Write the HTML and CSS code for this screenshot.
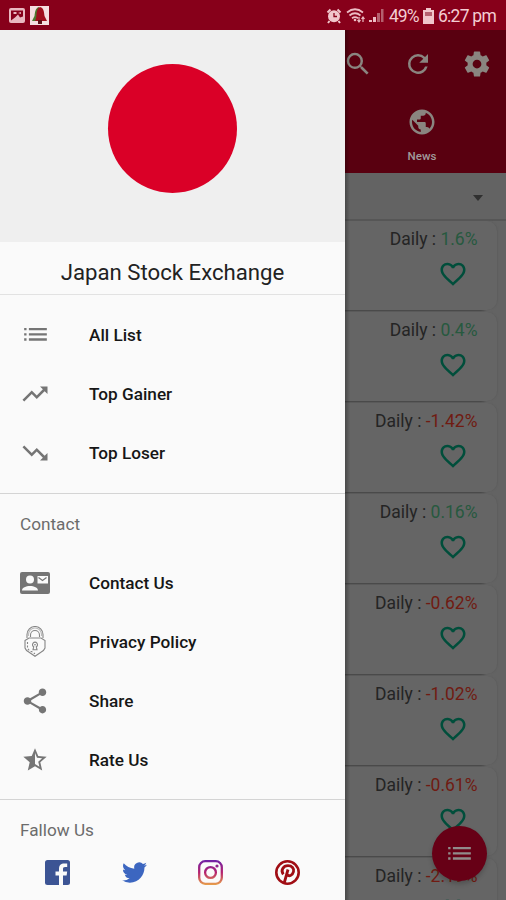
FILE: index.html
```html
<!DOCTYPE html>
<html lang="en">
<head>
<meta charset="utf-8">
<title>Japan Stock Exchange</title>
<link rel="stylesheet" href="styles.css">
</head>
<body>
<svg class="defs" aria-hidden="true">
  <defs>
    <symbol id="list" viewBox="0 0 24 18"><path d="M0 1h2.500v2.500H0zM5 1h19v2.500H5zM0 6.500h2.500V9H0zM5 6.500h19V9H5zM0 12h2.500v2.500H0zM5 12h19v2.500H5z"/></symbol>
    <symbol id="heart" viewBox="0 0 24 24"><path d="M16.5 3c-1.74 0-3.41.81-4.5 2.09C10.91 3.81 9.24 3 7.5 3 4.42 3 2 5.42 2 8.5c0 3.78 3.4 6.86 8.55 11.54L12 21.35l1.45-1.32C18.6 15.36 22 12.28 22 8.5 22 5.42 19.58 3 16.5 3zm-4.4 15.55l-.1.1-.1-.1C7.14 14.24 4 11.39 4 8.5 4 6.5 5.5 5 7.5 5c1.54 0 3.04.99 3.57 2.36h1.87C13.46 5.99 14.96 5 16.5 5c2 0 3.5 1.5 3.5 3.5 0 2.89-3.14 5.74-7.9 10.05z"/></symbol>
  </defs>
</svg>
<div class="phone">
  <header class="status">
    <svg class="st-pic" viewBox="0 0 16 15"><rect width="16" height="15" rx="2" fill="#e9b8c0"/><path d="M2 2.500h12v6l-3 1-2-3-3 3-4 3z" fill="#87001a"/><path d="M4.500 4h3v2h-3zM9 5l3-1v2z" fill="#e9b8c0"/></svg>
    <svg class="st-bell" viewBox="0 0 19 19"><rect width="19" height="19" fill="#f5dfe0"/><path d="M9 1C5 2 5 7 4.500 10L2 15h7z" fill="#4d7a2e"/><path d="M10 1c4 1 4 5 4.500 9l2.500 5H5c2-3 1-7 2-10 .5-2 1-3 3-4z" fill="#a00f1d"/><path d="M8 14h4v4H8z" fill="#5b1116"/></svg>
    <span class="grow"></span>
    <svg class="st-alarm" viewBox="0 0 16 16"><circle cx="8" cy="8.300" r="6" fill="#f0c5cb"/><path d="M1.500 4.500l3-3M14.500 4.500l-3-3M3.500 13L2 15M12.500 13l1.500 2" stroke="#f0c5cb" stroke-width="2"/><path d="M8 5v3.500h3" fill="none" stroke="#87001a" stroke-width="1.300"/></svg>
    <svg class="st-wifi" viewBox="0 0 20 17"><g fill="none" stroke="#edbcc4" stroke-width="1.700"><path d="M1 5.500Q9 -1 17 5.500M3.500 8.500Q9 4 14.500 8.500M6 11.200Q9 9 12 11.200"/></g><circle cx="9" cy="13" r="1.300" fill="#edbcc4"/><path d="M13 10v5m-1.500-2l1.500 2 1.500-2M17 15v-5m-1.500 2l1.500-2 1.500 2" stroke="#edbcc4" fill="none" stroke-width="1.200"/></svg>
    <svg class="st-signal" viewBox="0 0 15 15"><path d="M0 12h3v2H0zM4 9h3v5H4z" fill="#edbcc4"/><path d="M8 5h3v9H8zM12 1h2.500v13H12z" fill="#b5606f"/></svg>
    <span class="st-pct">49%</span>
    <svg class="st-batt" viewBox="0 0 11 16"><path d="M3 0h5v2h3v14H0V2h3z" fill="#f0c5cb"/><path d="M2 4h7v4H2z" fill="#b5606f"/></svg>
    <span class="st-time">6:27 pm</span>
  </header>
  <div class="body">
    <nav class="drawer">
      <div class="flag"><span class="disc"></span></div>
      <h1 class="title">Japan Stock Exchange</h1>
      <ul class="group group-lists">
        <li class="item"><span class="ico"><svg class="i-list"><use href="#list"/></svg></span>All List</li>
        <li class="item"><span class="ico"><svg class="i30" viewBox="0 0 24 24"><path d="M16 6l2.290 2.290-4.880 4.880-4-4L2 16.590 3.410 18l6-6 4 4 6.300-6.290L22 12V6z"/></svg></span>Top Gainer</li>
        <li class="item"><span class="ico"><svg class="i30" viewBox="0 0 24 24"><path d="M16 18l2.290-2.290-4.880-4.880-4 4L2 7.410 3.410 6l6 6 4-4 6.300 6.290L22 12v6z"/></svg></span>Top Loser</li>
      </ul>
      <h2 class="subhead">Contact</h2>
      <ul class="group group-contact">
        <li class="item"><span class="ico"><svg class="i-card" viewBox="0 0 30 22"><rect width="30" height="22" rx="2"/><g fill="#fafafa"><circle cx="10" cy="7.500" r="4"/><path d="M2 18.500c0-6 16-6 16 0zM17.500 4H28v7.500H17.500z"/></g><path d="M18.500 5.500l4 3 4-3" fill="none" stroke="#757575" stroke-width="1.200"/></svg></span>Contact Us</li>
        <li class="item"><span class="ico"><svg class="i-lock" viewBox="0 0 22 31"><g fill="none" stroke="#858585" stroke-width="1.100"><path d="M3 12V8.500a8 8 0 0 1 16 0V12M6.500 11V9a4.500 4.500 0 0 1 9 0v2"/><path d="M4.500 10V8.500a6.500 6.500 0 0 1 13 0V10" stroke="#bbb"/><path d="M1 14.500l4-2.500h12l4 2.500v7.500q-1 3-4.500 4.500L11 30.300l-5.500-3.800Q2 25 1 22z"/><path d="M3.500 16v6q1 2.500 4 3.500l3.500 2.300" stroke-dasharray="2 1.500"/><path d="M9.700 20.800a2.500 2.500 0 1 1 2.600 0l.7 3H9z"/></g><circle cx="11" cy="18.700" r=".8"/></svg></span>Privacy Policy</li>
        <li class="item"><span class="ico"><svg class="i-share" viewBox="0 0 24 24"><path d="M18 16.080c-.76 0-1.440.3-1.960.77L8.910 12.700c.05-.23.09-.46.09-.7s-.04-.47-.09-.7l7.050-4.110c.54.5 1.250.81 2.040.81 1.660 0 3-1.340 3-3s-1.340-3-3-3-3 1.340-3 3c0 .24.04.47.09.7L8.040 9.810C7.500 9.310 6.790 9 6 9c-1.660 0-3 1.340-3 3s1.340 3 3 3c.79 0 1.500-.31 2.040-.81l7.120 4.160c-.05.21-.08.43-.08.65 0 1.610 1.310 2.920 2.920 2.920s2.920-1.310 2.920-2.920-1.310-2.920-2.920-2.920z"/></svg></span>Share</li>
        <li class="item"><span class="ico"><svg class="i-star" viewBox="0 0 24 24"><path d="M22 9.240l-7.190-.62L12 2 9.190 8.630 2 9.240l5.460 4.730L5.820 21 12 17.270 18.180 21l-1.630-7.030L22 9.240zM12 15.400V6.100l1.710 4.040 4.380.38-3.320 2.880 1 4.280L12 15.400z"/></svg></span>Rate Us</li>
      </ul>
      <h2 class="subhead">Fallow Us</h2>
      <div class="social">
        <svg viewBox="0 0 25 25"><rect width="25" height="25" rx="2.500" fill="#3c5494"/><path d="M14 25v-9.500h-3.500v-4H14V9c0-3.800 2-5.500 5.200-5.500h3v3.600h-2.100c-1.700 0-2.100.8-2.100 2.100v2.300h4.200l-.6 4H18V25z" fill="#fafafa"/></svg>
        <svg viewBox="0 0 24 24"><path fill="#3c66c0" d="M23.950 4.570a10 10 0 0 1-2.820.77 4.960 4.960 0 0 0 2.160-2.720c-.95.550-2 .960-3.130 1.180a4.920 4.920 0 0 0-8.380 4.480C7.690 8.090 4.070 6.130 1.640 3.160a4.820 4.820 0 0 0-.67 2.470c0 1.710.87 3.210 2.190 4.100a4.900 4.900 0 0 1-2.230-.62v.06a4.920 4.920 0 0 0 3.950 4.830 5 5 0 0 1-2.210.08 4.940 4.940 0 0 0 4.600 3.420A9.870 9.870 0 0 1 0 19.540a13.990 13.990 0 0 0 7.550 2.210c9.050 0 14-7.500 14-13.980 0-.21 0-.42-.02-.63a9.940 9.940 0 0 0 2.420-2.570z"/></svg>
        <svg viewBox="0 0 25 25"><defs><linearGradient id="ig" x1="0" y1="0" x2="0" y2="25" gradientUnits="userSpaceOnUse"><stop offset="0" stop-color="#6d22a8"/><stop offset=".5" stop-color="#b5226f"/><stop offset="1" stop-color="#e8a04a"/></linearGradient></defs><g fill="none" stroke="url(#ig)" stroke-width="2.300"><rect x="1.200" y="1.200" width="22.600" height="22.600" rx="6"/><circle cx="12.500" cy="12.500" r="5.400"/></g><circle cx="19" cy="6" r="1.600" fill="#8f238c"/></svg>
        <svg viewBox="0 0 25 25"><circle cx="12.500" cy="12.500" r="11.200" fill="none" stroke="#a00d14" stroke-width="2.600"/><path d="M8.300 14.300c-3-4 0-8.600 4.700-8.600 4 0 6.300 2.700 5.500 6-1 4.200-4.700 5-6.200 2.800M13 9.500L9.200 23" fill="none" stroke="#a00d14" stroke-width="2.800"/></svg>
      </div>
    </nav>
    <main class="page">
      <div class="appbar">
        <svg class="a-search" viewBox="0 0 24 24"><path d="M15.500 14h-.79l-.28-.27A6.470 6.470 0 0 0 16 9.500 6.500 6.500 0 1 0 9.500 16c1.610 0 3.090-.59 4.230-1.570l.27.28v.79l5 4.990L20.490 19l-4.990-5zm-6 0C7.010 14 5 11.990 5 9.500S7.010 5 9.500 5 14 7.010 14 9.500 11.990 14 9.500 14z"/></svg>
        <svg viewBox="0 0 24 24"><path d="M17.650 6.350A7.960 7.960 0 0 0 12 4a8 8 0 1 0 7.730 10h-2.080A6 6 0 1 1 12 6c1.660 0 3.140.69 4.220 1.780L13 11h7V4l-2.350 2.350z"/></svg>
        <svg viewBox="0 0 24 24"><path d="M19.430 12.980c.04-.32.07-.64.07-.98s-.03-.66-.07-.98l2.110-1.650c.19-.15.24-.42.12-.64l-2-3.460c-.12-.22-.39-.3-.61-.22l-2.490 1c-.52-.4-1.080-.73-1.690-.98l-.38-2.650A.49.490 0 0 0 14 2h-4c-.25 0-.46.18-.49.42l-.38 2.650c-.61.25-1.170.59-1.690.98l-2.490-1c-.23-.09-.49 0-.61.22l-2 3.460c-.13.22-.07.49.12.64l2.110 1.650c-.04.32-.07.65-.07.98s.03.66.07.98l-2.110 1.650c-.19.15-.24.42-.12.64l2 3.460c.12.22.39.3.61.22l2.490-1c.52.4 1.080.73 1.690.98l.38 2.650c.03.24.24.42.49.42h4c.25 0 .46-.18.49-.42l.38-2.650c.61-.25 1.170-.59 1.690-.98l2.490 1c.23.09.49 0 .61-.22l2-3.460c.12-.22.07-.49-.12-.64l-2.110-1.650zM12 15.500a3.500 3.500 0 1 1 0-7 3.500 3.500 0 0 1 0 7z"/></svg>
      </div>
      <div class="tab">
        <svg viewBox="0 0 24 24"><path d="M12 2C6.480 2 2 6.480 2 12s4.480 10 10 10 10-4.480 10-10S17.520 2 12 2zm-1 17.930c-3.950-.49-7-3.850-7-7.930 0-.62.08-1.210.21-1.790L9 15v1c0 1.100.9 2 2 2v1.930zm6.900-2.540c-.26-.81-1-1.390-1.900-1.390h-1v-3c0-.55-.45-1-1-1H8v-2h2c.55 0 1-.45 1-1V7h2c1.100 0 2-.9 2-2v-.41c2.930 1.190 5 4.060 5 7.410 0 2.080-.8 3.970-2.100 5.390z"/></svg>
        <span>News</span>
      </div>
      <div class="filter"><span class="caret"></span></div>
      <div class="cards">
        <section class="card"><p>Daily : <b class="up">1.6%</b></p><svg><use href="#heart"/></svg></section>
        <section class="card"><p>Daily : <b class="up">0.4%</b></p><svg><use href="#heart"/></svg></section>
        <section class="card"><p>Daily : <b class="down">-1.42%</b></p><svg><use href="#heart"/></svg></section>
        <section class="card"><p>Daily : <b class="up">0.16%</b></p><svg><use href="#heart"/></svg></section>
        <section class="card"><p>Daily : <b class="down">-0.62%</b></p><svg><use href="#heart"/></svg></section>
        <section class="card"><p>Daily : <b class="down">-1.02%</b></p><svg><use href="#heart"/></svg></section>
        <section class="card"><p>Daily : <b class="down">-0.61%</b></p><svg><use href="#heart"/></svg></section>
        <section class="card"><p>Daily : <b class="down">-2.19%</b></p><svg><use href="#heart"/></svg></section>
      </div>
      <button class="fab" aria-label="List"><svg><use href="#list"/></svg></button>
    </main>
  </div>
</div>
</body>
</html>
```
FILE: styles.css
```css
* { box-sizing: border-box; }
body { margin: 0; font-family: Roboto, "Liberation Sans", sans-serif; }
h1, h2, p, ul { margin: 0; padding: 0; font-weight: 400; }
ul { list-style: none; }
svg { display: block; flex: none; }
.defs { position: absolute; width: 0; height: 0; }
.phone { width: 506px; height: 900px; display: flex; flex-direction: column; overflow: hidden; }

.status { height: 30px; flex: none; background: #87001a; color: #f3cdd2; display: flex; align-items: center; padding: 1px 9px 0; font-size: 17.5px; }
.grow { flex: 1; }
.st-pic { width: 16px; height: 15px; margin-right: 5px; }
.st-bell { width: 19px; height: 19px; }
.st-alarm { width: 16px; height: 16px; margin-right: 4px; }
.st-wifi { width: 20px; height: 17px; margin-right: 3px; }
.st-signal { width: 15px; height: 15px; margin-right: 5px; }
.st-pct { width: 30px; margin-right: 4px; letter-spacing: -1px; }
.st-batt { width: 11px; height: 16px; margin-right: 4px; }
.st-time { width: 59px; white-space: nowrap; letter-spacing: -0.75px; }

.body { flex: 1; display: flex; min-height: 0; }
.drawer { width: 345px; flex: none; background: #fafafa; }
.flag { height: 212px; background: #efefef; display: flex; justify-content: center; padding-top: 34px; }
.disc { width: 129px; height: 129px; border-radius: 50%; background: #da0027; }
.title { height: 53px; line-height: 61px; border-bottom: 1px solid #e2e2e2; text-align: center; font-size: 22.2px; color: #222; }
.group { border-bottom: 1px solid #d4d4d4; }
.group-lists { padding: 10px 0 11px; }
.group-contact { padding-bottom: 10px; }
.item { height: 59px; display: flex; align-items: center; font-size: 17.2px; font-weight: 500; color: #161616; }
.ico { width: 89px; padding-left: 20px; display: flex; fill: #757575; }
.ico svg { margin-right: auto; }
.i30 { width: 30px; height: 30px; }
.i-list { width: 23px; height: 17px; margin-left: 4px; position: relative; top: 1px; }
.i-card { width: 30px; height: 22px; }
.i-lock { width: 22px; height: 31px; margin-left: 4px; }
.i-share { width: 30px; height: 30px; }
.i-star { width: 28px; height: 28px; margin-left: 1px; }
.subhead { height: 59px; line-height: 61px; padding-left: 20px; font-size: 17.2px; color: #6c6c6c; }
.social { display: flex; gap: 51.5px; padding: 1px 0 0 45px; }
.social svg { width: 25px; height: 25px; }

.page { flex: 1; min-width: 0; position: relative; background: #636363; overflow: hidden; }
.page::before { content: ""; position: absolute; inset: 0 auto 0 0; width: 5px; background: linear-gradient(to right, rgba(0, 0, 0, .28), transparent); z-index: 1; }
.appbar, .tab { background: #590010; fill: #8a8580; }
.appbar { height: 69px; display: flex; align-items: center; justify-content: space-between; padding: 0 14px 1px 0; }
.appbar svg { width: 30px; height: 30px; }
.appbar .a-search { margin-left: -2px; }
.tab { height: 74px; padding-top: 8px; display: flex; flex-direction: column; align-items: center; color: #a19b9b; font-size: 11.5px; font-weight: 500; gap: 12px; padding-right: 7px; }
.tab svg { width: 30px; height: 30px; }
.filter { height: 48px; border-bottom: 2px solid #565656; display: flex; align-items: center; justify-content: flex-end; padding: 4px 23px 0 0; }
.caret { border: 5.5px solid transparent; border-top: 6px solid #303030; border-bottom: 0; }
.cards { display: flex; flex-direction: column; gap: 2px; padding-right: 9px; }
.card { height: 89px; flex: none; border-radius: 0 10px 10px 0; background: #656565; box-shadow: -6px 2px 2px -1px #424242, 1px 0 1px #5e5e5e; padding: 7px 19.5px 0 0; display: flex; flex-direction: column; align-items: flex-end; font-size: 17.5px; color: #242424; line-height: 22px; }
.card b { font-weight: 400; }
.card svg { width: 30px; height: 30px; margin: 9px 10px 0 0; fill: #004e3b; }
.up { color: #27593f; }
.down { color: #701b12; }
.fab { position: absolute; right: 19px; bottom: 19px; width: 55px; height: 55px; border: 0; border-radius: 50%; background: #670016; display: flex; align-items: center; justify-content: center; fill: #918b8b; box-shadow: 0 3px 5px rgba(0, 0, 0, .2); }
.fab svg { width: 23px; height: 17px; margin-top: 2px; }
```
